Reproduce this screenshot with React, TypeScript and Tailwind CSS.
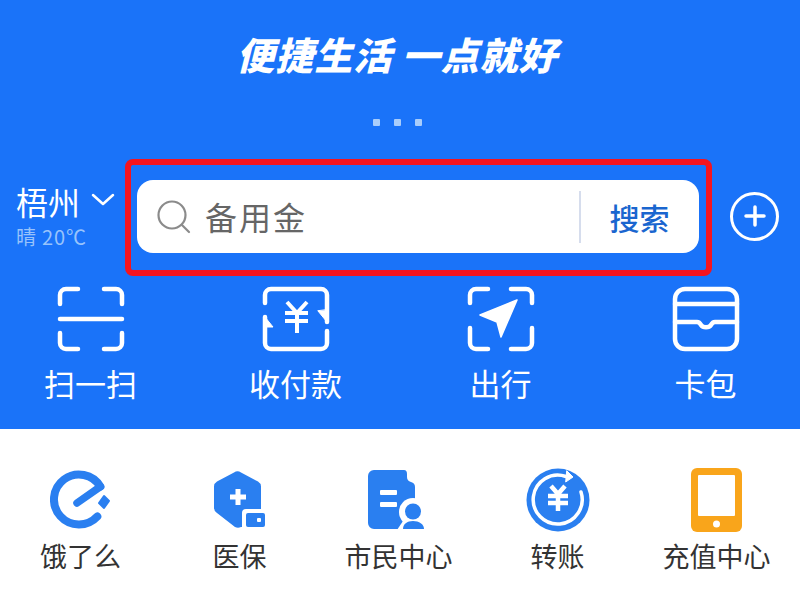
const cjk = { fontFamily: '"Noto Sans CJK SC", sans-serif' };

function Scan() {
  return (
    <svg width="68" height="66" viewBox="0 0 68 66" fill="none" stroke="white" strokeWidth="4.5" strokeLinecap="round" strokeLinejoin="round">
      <path d="M3 18V9a6 6 0 0 1 6-6h12M47 3h12a6 6 0 0 1 6 6v9M3 47v10a6 6 0 0 0 6 6h12M47 63h12a6 6 0 0 0 6-6V47" />
      <path d="M3 33h62" />
    </svg>
  );
}
function Pay() {
  return (
    <svg width="68" height="66" viewBox="0 0 68 66" fill="none" stroke="white" strokeWidth="4.5" strokeLinecap="round" strokeLinejoin="round">
      <path d="M3 17V9a6 6 0 0 1 6-6h50a6 6 0 0 1 6 6v27" />
      <path d="M3 31v26a6 6 0 0 0 6 6h50a6 6 0 0 0 6-6V45" />
      <path d="M25 16l10 11 10-11M23 27h23M23 35h23M35 27v20" strokeWidth="4" strokeLinecap="butt" />
      <path d="M56 25l9 11V24z" fill="white" stroke="white" strokeWidth="1" />
      <path d="M3 31l8 10H3z" fill="white" stroke="white" strokeWidth="1" />
    </svg>
  );
}
function Go() {
  return (
    <svg width="68" height="66" viewBox="0 0 68 66" fill="none" stroke="white" strokeWidth="4.5" strokeLinecap="round" strokeLinejoin="round">
      <path d="M3 17V9a6 6 0 0 1 6-6h12M44 3h15a6 6 0 0 1 6 6v8M3 42v15a6 6 0 0 0 6 6h12M44 63h15a6 6 0 0 0 6-6V42" />
      <path d="M50 14L13 29l17 7 4 15z" fill="white" stroke="white" strokeWidth="1.500" />
    </svg>
  );
}
function Wallet() {
  return (
    <svg width="68" height="66" viewBox="0 0 68 66" fill="none" stroke="white" strokeWidth="4.5" strokeLinecap="round" strokeLinejoin="round">
      <rect x="3" y="3" width="62" height="60" rx="10" />
      <path d="M3 18h62" />
      <path d="M3 36h22c2 0 3 1 4 3 2 3 8 3 10 0 1-2 2-3 4-3h22" />
    </svg>
  );
}
function Eleme() {
  return (
    <svg width="62" height="60" viewBox="0 0 62 60" fill="none">
      <path d="M50.4 16.600A25 25 0 1 0 47.300 46.500" stroke="#2a7ff0" strokeWidth="8" strokeLinecap="round" fill="none" />
      <path d="M50.4 16.600L27 33" stroke="#2a7ff0" strokeWidth="7.500" strokeLinecap="round" />
      <path d="M54 26l5 5-5 7-5-5z" fill="#2a7ff0" stroke="#2a7ff0" strokeWidth="2" strokeLinejoin="round" />
    </svg>
  );
}
function Medical() {
  return (
    <svg width="54" height="58" viewBox="0 0 54 58" fill="none">
      <path d="M21 1.500a6 6 0 0 1 7 0l17 9a6 6 0 0 1 3 5V38H33a4 4 0 0 0-4 4v14h-1c-2 1-4 1-6 0L4 42a6 6 0 0 1-3-5V15.500a6 6 0 0 1 3-5z" fill="#2a7ff0" />
      <path d="M25 18v16M17 26h16" stroke="white" strokeWidth="5" strokeLinecap="butt" />
      <rect x="33" y="42" width="19" height="14" rx="2" fill="#2a7ff0" />
      <rect x="44" y="47" width="4" height="4" rx="1" fill="white" />
    </svg>
  );
}
function Citizen() {
  return (
    <svg width="62" height="60" viewBox="0 0 62 60" fill="none">
      <path d="M6 0H36q3 0 3 4v3q0 4 4 5 4 1 4 5V59H6a6 6 0 0 1-6-6V6a6 6 0 0 1 6-6z" fill="#2a7ff0" />
      <path d="M29 60l8-12h25v12z" fill="white" />
      <circle cx="45" cy="42" r="14" fill="white" />
      <rect x="12" y="20" width="17" height="5" rx="1" fill="white" />
      <rect x="12" y="32" width="17" height="5" rx="1" fill="white" />
      <circle cx="45" cy="41.500" r="8" fill="#2a7ff0" />
      <path d="M35 59c0-5 4-8 10-8s11 3 11 8z" fill="#2a7ff0" />
    </svg>
  );
}
function Transfer() {
  return (
    <svg width="64" height="64" viewBox="0 0 64 64" fill="none">
      <circle cx="32" cy="32" r="31.500" fill="#2a7ff0" />
      <path d="M40 8.500A24.500 24.500 0 1 0 55 24" stroke="white" strokeWidth="3.500" strokeLinecap="round" />
      <path d="M40.700 2.700L47 9l-7.300 5z" fill="white" stroke="white" strokeWidth="1" strokeLinejoin="round" />
      <path d="M25 18l7 8 7-8M22 28h20M22 35h20M32 26v17" stroke="white" strokeWidth="4.500" />
    </svg>
  );
}
function Tablet() {
  return (
    <svg width="52" height="64" viewBox="0 0 52 64" fill="none">
      <rect x="0" y="0" width="51" height="64" rx="6" fill="#f9a51b" />
      <rect x="7" y="7" width="37" height="41" rx="1" fill="white" />
      <circle cx="25.500" cy="56" r="3.500" fill="white" />
    </svg>
  );
}

const top = [
  { label: "扫一扫", icon: <Scan /> },
  { label: "收付款", icon: <Pay /> },
  { label: "出行", icon: <Go /> },
  { label: "卡包", icon: <Wallet /> },
];
const bottom = [
  { label: "饿了么", icon: <Eleme /> },
  { label: "医保", icon: <Medical /> },
  { label: "市民中心", icon: <Citizen /> },
  { label: "转账", icon: <Transfer /> },
  { label: "充值中心", icon: <Tablet /> },
];

export default function App() {
  return (
    <div className="w-[800px] h-[600px] overflow-hidden bg-white flex flex-col" style={cjk}>
      <div className="h-[429px] bg-[#1a73f9] flex flex-col">
        <div className="h-[119px] pt-[31px] pr-[6px] flex justify-center">
          <h1 className="text-[38px] leading-[46px] font-black italic text-white tracking-[1px] whitespace-pre">便捷生活 一点就好</h1>
        </div>
        <div className="flex justify-center gap-[14px] pr-[5px]">
          {[0, 1, 2].map((i) => (
            <span key={i} className="w-[7px] h-[7px] rounded-[1px] bg-[#a9cdfb]" />
          ))}
        </div>
        <div className="flex items-center mt-[33px]">
          <div className="w-[125px] shrink-0 pl-[16px] pt-[2px] mb-[9px] flex flex-col">
            <div className="flex items-center gap-[11px] text-white">
              <span className="text-[32px] leading-[42px] whitespace-nowrap">梧州</span>
              <svg className="mb-[2px]" width="24" height="14" viewBox="0 0 24 14" fill="none" stroke="white" strokeWidth="2.500" strokeLinecap="round" strokeLinejoin="round"><path d="M2 2l10 9 10-9" /></svg>
            </div>
            <span className="mt-[3px] text-[20px] leading-[24px] tracking-[0.8px] text-[#98c3fb] whitespace-nowrap">晴 20℃</span>
          </div>
          <div className="w-[587px] h-[117px] shrink-0 border-[6px] border-[#f5141e] rounded-[8px] pl-[6px] pr-[7px] pt-[15px]">
            <div className="h-[73px] bg-white rounded-[16px] flex items-center pl-[20px]">
              <svg width="34" height="34" viewBox="0 0 34 34" fill="none" stroke="#8b8b8b" strokeWidth="2.200" strokeLinecap="round"><circle cx="15" cy="15" r="13.500" /><path d="M25 25l7 7" /></svg>
              <span className="ml-[14px] mb-[2px] text-[32px] leading-[42px] text-[#666666] tracking-[2px] flex-1">备用金</span>
              <span className="w-[2px] h-[52px] bg-[#d6dded]" />
              <span className="w-[118px] pr-[1px] text-center text-[30px] leading-[40px] font-medium text-[#1a66cf]">搜索</span>
            </div>
          </div>
          <div className="ml-[18px] mb-[3px] w-[49px] h-[49px] shrink-0 rounded-full border-[3px] border-white flex items-center justify-center">
            <svg width="26" height="26" viewBox="0 0 26 26" stroke="white" strokeWidth="3.500" strokeLinecap="round"><path d="M13 4v18M4 13h18" /></svg>
          </div>
        </div>
        <div className="flex mt-[10px]">
          {top.map((t) => (
            <div key={t.label} className="w-[205px] shrink-0 flex flex-col items-center first:ml-[-12px]">
              {t.icon}
              <span className="mt-[11px] text-[31px] leading-[40px] text-white whitespace-nowrap">{t.label}</span>
            </div>
          ))}
        </div>
      </div>
      <div className="flex pt-[38px] pl-[1px]">
        {bottom.map((b) => (
          <div key={b.label} className="w-[159px] flex flex-col items-center">
            <div className="h-[65px] flex items-center justify-center">{b.icon}</div>
            <span className="mt-[6px] text-[27px] leading-[36px] text-[#333333] whitespace-nowrap">{b.label}</span>
          </div>
        ))}
      </div>
    </div>
  );
}
